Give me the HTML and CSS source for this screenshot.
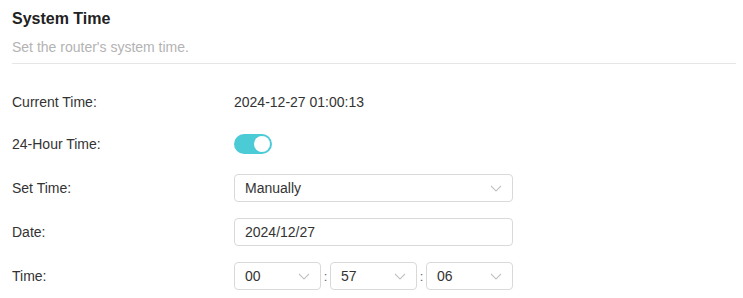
FILE: index.html
```html
<!DOCTYPE html>
<html>
<head>
<meta charset="utf-8">
<link rel="stylesheet" href="styles.css">
</head>
<body>
<div class="page">
  <div class="header">
    <h1 class="title">System Time</h1>
    <p class="subtitle">Set the router's system time.</p>
  </div>
  <div class="form">
    <div class="row first">
      <div class="label">Current Time:</div>
      <div class="value">2024-12-27 01:00:13</div>
    </div>
    <div class="row">
      <div class="label">24-Hour Time:</div>
      <div class="value"><span class="toggle"><span class="knob"></span></span></div>
    </div>
    <div class="row">
      <div class="label">Set Time:</div>
      <div class="value">
        <div class="box select wide"><span>Manually</span><svg class="chev" width="12" height="7" viewBox="0 0 12 7"><polyline points="1,1 6,6 11,1" fill="none" stroke="#c4c4c4" stroke-width="1.1"/></svg></div>
      </div>
    </div>
    <div class="row">
      <div class="label">Date:</div>
      <div class="value">
        <div class="box wide"><span>2024/12/27</span></div>
      </div>
    </div>
    <div class="row">
      <div class="label">Time:</div>
      <div class="value">
        <div class="timegroup">
          <div class="box select"><span>00</span><svg class="chev" width="12" height="7" viewBox="0 0 12 7"><polyline points="1,1 6,6 11,1" fill="none" stroke="#c4c4c4" stroke-width="1.1"/></svg></div>
          <span class="colon">:</span>
          <div class="box select"><span>57</span><svg class="chev" width="12" height="7" viewBox="0 0 12 7"><polyline points="1,1 6,6 11,1" fill="none" stroke="#c4c4c4" stroke-width="1.1"/></svg></div>
          <span class="colon">:</span>
          <div class="box select"><span>06</span><svg class="chev" width="12" height="7" viewBox="0 0 12 7"><polyline points="1,1 6,6 11,1" fill="none" stroke="#c4c4c4" stroke-width="1.1"/></svg></div>
        </div>
      </div>
    </div>
  </div>
</div>
</body>
</html>
```
FILE: styles.css
```css
* { box-sizing: border-box; }
html, body { margin: 0; padding: 0; background: #fff; }
body {
  font-family: "Liberation Sans", Arial, sans-serif;
  font-size: 14px;
  color: #333;
}
.page { padding: 0 7px 0 12px; }
.header {
  padding-top: 9px;
  padding-bottom: 8px;
  border-bottom: 1px solid #e6e6e6;
}
.title {
  margin: 0;
  font-size: 16px;
  line-height: 20px;
  font-weight: bold;
  color: #222;
}
.subtitle {
  margin: 10px 0 0 0;
  font-size: 14px;
  line-height: 16px;
  color: #b3b3b3;
}
.form { padding-top: 16px; }
.row {
  display: flex;
  align-items: center;
  height: 44px;
}
.row.first { height: 44px; margin-bottom: -2px; }
.label { width: 222px; flex: none; color: #333; }
.value { flex: none; width: 279px; display: flex; align-items: center; }
.toggle {
  display: flex;
  align-items: center;
  justify-content: flex-end;
  width: 38px;
  height: 20px;
  border-radius: 10px;
  background: #4bcbd6;
  padding: 2px;
}
.knob {
  width: 16px;
  height: 16px;
  border-radius: 50%;
  background: #fff;
}
.box {
  height: 28px;
  border: 1px solid #d9d9d9;
  border-radius: 4px;
  display: flex;
  align-items: center;
  padding: 0 10px 0 10px;
  color: #333;
  background: #fff;
}
.box.wide { width: 279px; }
.select { justify-content: space-between; }
.chev { display: block; margin-right: 0; }
.timegroup { display: flex; align-items: center; width: 279px; }
.timegroup .box { flex: 1 1 0; }
.colon { width: 9px; text-align: center; color: #666; font-size: 13px; }
```
